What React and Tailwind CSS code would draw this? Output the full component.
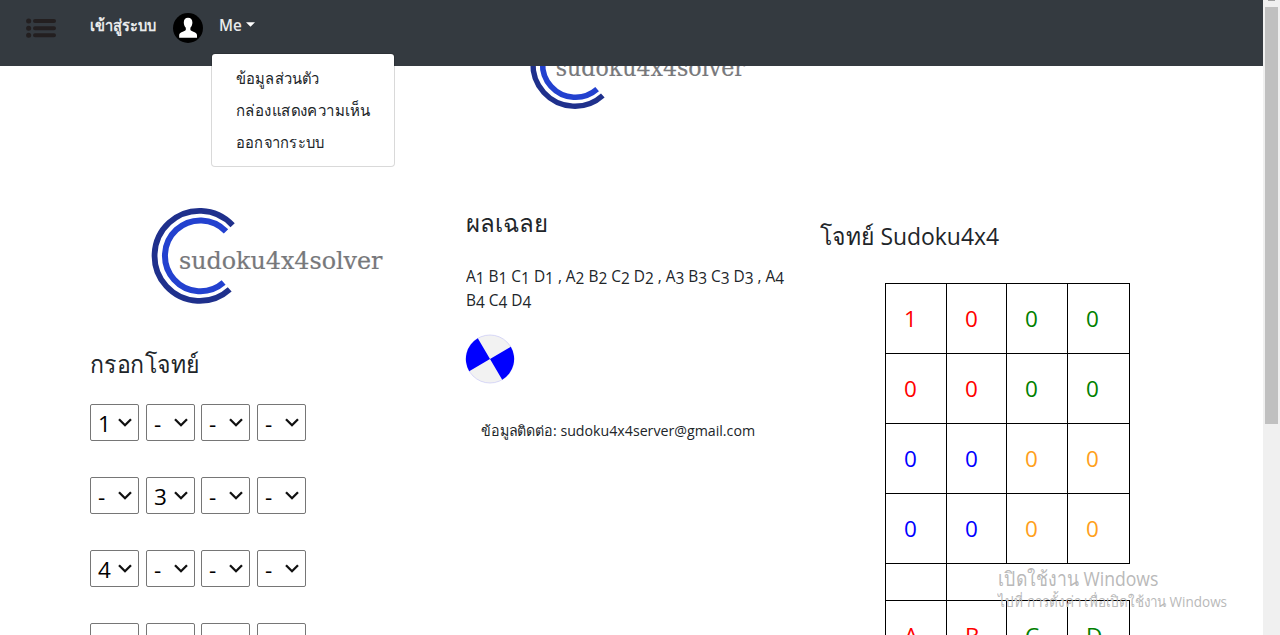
const LATIN = "font-['Open_Sans','Noto_Sans',sans-serif]";

function Logo({ className }) {
  return (
    <svg viewBox="150 206 234 100" className={className} fill="none">
      <path d="M232.600 225.300A45 45 0 1 0 229.700 289.300" stroke="#1f308c" strokeWidth="5.800" />
      <path d="M226 231.400A35.400 35.400 0 1 0 223.600 282.500" stroke="#2341cf" strokeWidth="6" />
      <text x="179" y="268.600" fontSize="25" textLength="203.500" lengthAdjust="spacingAndGlyphs" fill="#77787b" stroke="#77787b" strokeWidth="0.200" fontFamily="'DejaVu Serif Condensed','DejaVu Serif',serif" fontStretch="condensed">
        sudoku4x4solver
      </text>
    </svg>
  );
}

function Cell({ value }) {
  return (
    <button className="flex h-[37px] w-[49px] items-center justify-between rounded-[2px] border border-[#767676] bg-white pl-[7px] pr-[6px] text-black">
      <span className="pt-[4px] text-[22.5px] leading-none">{value}</span>
      <svg viewBox="0 0 14 9" className="ml-auto h-[9px] w-[14px]" fill="none" stroke="#111" strokeWidth="2.3">
        <path d="M1 1.200l6 6 6-6" />
      </svg>
    </button>
  );
}

const PUZZLE = [
  ["1", "-", "-", "-"],
  ["-", "3", "-", "-"],
  ["4", "-", "-", "-"],
  ["", "", "", ""],
];

const TONES = {
  r: "text-[#ff0000]",
  g: "text-[#008000]",
  b: "text-[#0000ff]",
  o: "text-[#ffa01c]",
};

function Row({ values, tones }) {
  return (
    <tr className="h-[70px]">
      {values.map((v, i) => (
        <td key={i} className={`border border-black pl-[18px] ${TONES[tones[i]]}`}>{v}</td>
      ))}
    </tr>
  );
}

function Answer({ letter, n }) {
  return (
    <>
      {letter}
      <span className="relative top-[2px]">{n}</span>
    </>
  );
}

const MENU = [
  { label: "ข้อมูลส่วนตัว", fit: "scale-x-[0.92]" },
  { label: "กล่องแสดงความเห็น", fit: "scale-x-[0.94]" },
  { label: "ออกจากระบบ", fit: "scale-x-[0.92]" },
];

export default function App() {
  return (
    <div className={`relative flex h-[635px] w-[1280px] overflow-hidden bg-white text-[#212529] ${LATIN}`}>
      <main className="h-full w-[1263px] overflow-hidden">
        <div className="pl-[528px] pt-[18px]">
          <Logo className="h-[93px] w-[219px]" />
        </div>
        <div className="grid grid-cols-[376px_354px_1fr] pl-[90px] pt-[95px]">
          <section>
            <Logo className="ml-[60px] h-[100px] w-[234px]" />
            <h2 className="mt-[40px] h-[58px] origin-left scale-x-[0.96] text-[24px] leading-[36px]">กรอกโจทย์</h2>
            <div className="flex flex-col gap-[36px]">
              {PUZZLE.map((row, i) => (
                <div key={i} className="grid grid-cols-[56px_55px_56px_49px]">
                  {row.map((v, j) => <Cell key={j} value={v} />)}
                </div>
              ))}
            </div>
          </section>
          <section className="-mt-px">
            <h2 className="text-[24px] leading-[36px]">ผลเฉลย</h2>
            <p className="mt-[23px] w-[330px] origin-left scale-x-[0.963] whitespace-nowrap text-[16px] leading-[24px]">
              {["1", "2", "3"].map((n) => (
                <span key={n}>
                  <Answer letter="A" n={n} /> <Answer letter="B" n={n} /> <Answer letter="C" n={n} /> <Answer letter="D" n={n} /> ,{" "}
                </span>
              ))}
              <Answer letter="A" n="4" />
              <br />
              <Answer letter="B" n="4" /> <Answer letter="C" n="4" /> <Answer letter="D" n="4" />
            </p>
            <svg viewBox="-25 -25 50 50" className="-ml-px mt-[22px] h-[50px] w-[50px]">
              <circle r="24" fill="#f2f2f2" stroke="#c9c9f5" strokeWidth="0.7" />
              <path d="M0 0L-12.200 -20.800A24.100 24.100 0 0 0 -20.800 12.200ZM0 0L20.800 -12.200A24.100 24.100 0 0 1 12.200 20.800Z" fill="#00f" />
            </svg>
            <p className="ml-[15px] mt-[36px] origin-left scale-x-[0.986] whitespace-nowrap text-[14.4px] leading-[22px]">
              ข้อมูลติดต่อ: sudoku4x4server@gmail.com
            </p>
          </section>
          <section className="pt-[12px]">
            <h2 className="origin-left scale-x-[0.955] whitespace-nowrap text-[24px] leading-[36px]">โจทย์ Sudoku4x4</h2>
            <table className="ml-[65px] mt-[29px] w-[245px] table-fixed border-collapse text-[22.5px] leading-[36px]">
              <colgroup>
                <col className="w-[61px]" />
                <col className="w-[60px]" />
                <col className="w-[61px]" />
                <col className="w-[62px]" />
              </colgroup>
              <tbody>
                <Row values={["1", "0", "0", "0"]} tones="rrgg" />
                <Row values={["0", "0", "0", "0"]} tones="rrgg" />
                <Row values={["0", "0", "0", "0"]} tones="bboo" />
                <Row values={["0", "0", "0", "0"]} tones="bboo" />
                <tr className="h-[37px]">
                  <td className="border border-black" />
                </tr>
                <Row values={["A", "B", "C", "D"]} tones="rrgg" />
              </tbody>
            </table>
          </section>
        </div>
      </main>

      <header className="absolute left-0 top-0 flex h-[66px] w-[1263px] items-start bg-[#343a40] text-[#e9eaeb]">
        <svg viewBox="0 0 30 20" className="ml-[26px] mt-[18px] h-[20px] w-[30px]" stroke="#231f20" strokeLinecap="round">
          <path d="M9 3h19M9 10.200h19M9 17.200h19" strokeWidth="4" />
          <path d="M2.600 3h.1M2.600 10.200h.1M2.600 17.200h.1" strokeWidth="5" />
        </svg>
        <span className="ml-[34px] mt-[13px] w-[83px] origin-left scale-x-[0.91] whitespace-nowrap text-[16px] font-semibold leading-[24px]">เข้าสู่ระบบ</span>
        <svg viewBox="0 0 30 30" className="mt-[13px] h-[30px] w-[30px]">
          <circle cx="15" cy="15" r="15" fill="#000" />
          <path d="M15 4.700c-2.700 0-4.200 2-4.200 4.800 0 2.200.8 4.200 2 5.300v2.200c-1 1.500-6.600 2-6.600 5.200v2.500h17.800v-2.500c0-3.200-5.700-3.700-6.600-5.200v-2.200c1.200-1.100 2-3.100 2-5.300 0-2.800-1.600-4.800-4.400-4.800z" fill="#fff" />
        </svg>
        <span className="ml-[16px] mt-[13px] w-[23px] origin-left scale-x-[0.95] text-[16px] font-semibold leading-[24px]">Me</span>
        <svg viewBox="0 0 10 5" className="ml-[4px] mt-[22px] h-[5px] w-[9px]">
          <path d="M0 0h10L5 5z" fill="#fff" />
        </svg>
      </header>

      <ul className="absolute left-[211px] top-[53px] h-[114px] w-[184px] rounded-[4px] border border-black/15 bg-white bg-clip-padding pl-[24px] pt-[8px] text-[16px] leading-[32px]">
        {MENU.map((m) => (
          <li key={m.label} className={`origin-left whitespace-nowrap ${m.fit}`}>{m.label}</li>
        ))}
      </ul>

      <div className="absolute left-[998px] top-[565px] whitespace-nowrap text-[#b9b9b9]">
        <p className="origin-left scale-x-[0.88] text-[20px] leading-[27px]">เปิดใช้งาน Windows</p>
        <p className="-mt-px origin-left scale-x-[0.9] text-[15px] leading-[20px]">ไปที่ การตั้งค่า เพื่อเปิดใช้งาน Windows</p>
      </div>

      <aside className="flex h-full w-[17px] flex-col items-center bg-[#f0f0f0]">
        <div className="h-px w-[7px] bg-[#a0a0a0]" />
        <div className="mt-[6px] h-[417px] w-[13px] bg-[#c0c0c0]" />
      </aside>
    </div>
  );
}
